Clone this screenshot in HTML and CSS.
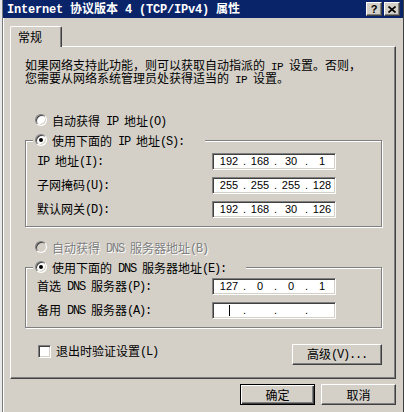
FILE: index.html
```html
<!DOCTYPE html>
<html lang="zh-CN">
<head>
<meta charset="utf-8">
<title>Internet 协议版本 4 (TCP/IPv4) 属性</title>
<link rel="stylesheet" href="styles.css">
</head>
<body>
<div class="window">
  <div class="titlebar">
    <span class="title"><span class="l">Internet </span>协议版本<span class="l"> 4 (TCP/IPv4) </span>属性</span>
    <div class="tbtns">
      <span class="tb tb-help">?</span>
      <span class="tb"><svg width="8" height="7" viewBox="0 0 8 7"><path d="M0.5 0.5 L7.5 6.5 M7.5 0.5 L0.5 6.5" stroke="#000" stroke-width="1.6" fill="none"/></svg></span>
    </div>
  </div>
  <div class="client">
    <div class="tabs"><div class="tab">常规</div></div>
    <div class="panel">
      <p class="desc"><span class="line">如果网络支持此功能，则可以获取自动指派的<span class="l"> IP </span>设置。否则，</span><span class="line">您需要从网络系统管理员处获得适当的<span class="l"> IP </span>设置。</span></p>

      <div class="opt first"><span class="radio"></span><span>自动获得<span class="l"> IP </span>地址<span class="l">(O)</span></span></div>

      <div class="group">
        <div class="ghead w1"><span class="radio on"></span><span>使用下面的<span class="l"> IP </span>地址<span class="l">(S):</span></span></div>
        <div class="rows r1">
          <span class="lab"><span class="l">IP </span>地址<span class="l">(I):</span></span>
          <div class="ip"><span class="f">192</span><span class="d">.</span><span class="f">168</span><span class="d">.</span><span class="f">30</span><span class="d">.</span><span class="f">1</span></div>
          <span class="lab">子网掩码<span class="l">(U):</span></span>
          <div class="ip"><span class="f">255</span><span class="d">.</span><span class="f">255</span><span class="d">.</span><span class="f">255</span><span class="d">.</span><span class="f">128</span></div>
          <span class="lab">默认网关<span class="l">(D):</span></span>
          <div class="ip"><span class="f">192</span><span class="d">.</span><span class="f">168</span><span class="d">.</span><span class="f">30</span><span class="d">.</span><span class="f">126</span></div>
        </div>
      </div>

      <div class="opt gap disabled"><span class="radio dis"></span><span>自动获得<span class="l"> DNS </span>服务器地址<span class="l">(B)</span></span></div>

      <div class="group">
        <div class="ghead w2"><span class="radio on"></span><span>使用下面的<span class="l"> DNS </span>服务器地址<span class="l">(E):</span></span></div>
        <div class="rows r2">
          <span class="lab">首选<span class="l"> DNS </span>服务器<span class="l">(P):</span></span>
          <div class="ip"><span class="f">127</span><span class="d">.</span><span class="f">0</span><span class="d">.</span><span class="f">0</span><span class="d">.</span><span class="f">1</span></div>
          <span class="lab">备用<span class="l"> DNS </span>服务器<span class="l">(A):</span></span>
          <div class="ip"><span class="f"><span class="caret"></span></span><span class="d">.</span><span class="f"></span><span class="d">.</span><span class="f"></span><span class="d">.</span><span class="f"></span></div>
        </div>
      </div>

      <div class="bottomrow">
        <div class="check"><span class="cb"></span><span>退出时验证设置<span class="l">(L)</span></span></div>
        <button class="btn adv">高级<span class="l">(V)...</span></button>
      </div>
    </div>
    <div class="actions">
      <button class="btn def">确定</button>
      <button class="btn">取消</button>
    </div>
  </div>
</div>
</body>
</html>
```

FILE: styles.css
```css
html, body {
  margin: 0;
  width: 404px;
  height: 412px;
  overflow: hidden;
}
body {
  background: linear-gradient(to right, #e8e8e8 0 2px, #7a7a7a 2px 3px, #d4d0c8 3px);
  font-family: "Noto Sans CJK SC", sans-serif;
  font-size: 12px;
  color: #000;
}
.l {
  font-family: "Liberation Mono", monospace;
  font-size: 12px;
  letter-spacing: -1.2px;
  vertical-align: 1px;
}
.window {
  margin-left: 3px;
  width: 401px;
  height: 412px;
  box-sizing: border-box;
  background: #d4d0c8;
  border-right: 1px solid #404040;
  display: flex;
  flex-direction: column;
}
.titlebar {
  height: 18px;
  flex: none;
  background: #0a246a;
  color: #fff;
  display: flex;
  align-items: center;
  justify-content: space-between;
  padding: 0 3px 0 4px;
}
.title {
  font-weight: bold;
  font-size: 12px;
  line-height: 18px;
  white-space: nowrap;
}
.title .l {
  font-size: 12px;
  letter-spacing: -0.2px;
  font-weight: bold;
  vertical-align: 0;
}
.tbtns {
  display: flex;
  gap: 2px;
}
.tb {
  width: 16px;
  height: 14px;
  box-sizing: border-box;
  background: #d4d0c8;
  border: 1px solid;
  border-color: #fff #404040 #404040 #fff;
  box-shadow: inset -1px -1px 0 #808080;
  display: flex;
  align-items: center;
  justify-content: center;
  color: #000;
}
.tb-help {
  font-family: "Liberation Sans", sans-serif;
  font-weight: bold;
  font-size: 11px;
  line-height: 12px;
}
.client {
  flex: 1;
  border-left: 1px solid #fff;
  padding: 8px 0 0 6px;
}
.tabs {
  display: flex;
}
.tab {
  position: relative;
  z-index: 1;
  width: 52px;
  height: 21px;
  box-sizing: border-box;
  margin-bottom: -1px;
  background: #d4d0c8;
  border-top: 1px solid #fff;
  border-left: 1px solid #fff;
  border-right: 1px solid #404040;
  box-shadow: inset -1px 0 0 #808080;
  border-radius: 2px 2px 0 0;
  padding-left: 7px;
  line-height: 19px;
}
.panel {
  width: 386px;
  height: 333px;
  box-sizing: border-box;
  border: 1px solid;
  border-color: #fff #404040 #404040 #fff;
  box-shadow: inset -1px -1px 0 #808080;
  padding: 11px 13px 0 14px;
}
.desc {
  margin: 0;
  display: flex;
  flex-direction: column;
  white-space: nowrap;
}
.desc .line {
  display: block;
  height: 13px;
  line-height: 13px;
  font-size: 12px;
}
.desc .l {
  font-size: 11px;
  letter-spacing: -0.6px;
  line-height: 11px;
  vertical-align: 0;
}
.opt {
  display: flex;
  align-items: center;
  gap: 5px;
  height: 20px;
  padding-left: 10px;
  white-space: nowrap;
}
.opt.first {
  margin-top: 26px;
}
.opt.gap {
  margin-top: 10px;
}
.opt.disabled {
  color: #808080;
  text-shadow: 1px 1px 0 #fff;
}
.radio {
  flex: none;
  position: relative;
  width: 12px;
  height: 12px;
  box-sizing: border-box;
  border-radius: 50%;
  border: 1px solid;
  border-color: #808080 #fff #fff #808080;
  background: #fff;
  box-shadow: inset 1px 1px 0 #404040, inset -1px -1px 0 #d4d0c8;
}
.radio.dis {
  background: #d4d0c8;
}
.radio.on::after {
  content: "";
  position: absolute;
  left: 3px;
  top: 3px;
  width: 4px;
  height: 4px;
  border-radius: 50%;
  background: #000;
}
.group {
  margin-top: 10px;
  border: 1px solid #808080;
  box-shadow: 1px 1px 0 #fff, inset 1px 1px 0 #fff;
  padding-bottom: 8px;
}
.ghead {
  display: flex;
  align-items: center;
  gap: 5px;
  height: 16px;
  margin-top: -9px;
  margin-left: 7px;
  padding: 0 2px;
  box-sizing: border-box;
  background: #d4d0c8;
  white-space: nowrap;
}
.ghead.w1 { width: 172px; }
.ghead.w2 { width: 213px; }
.rows {
  display: grid;
  grid-template-columns: 175px 124px;
  grid-auto-rows: 17px;
  row-gap: 7px;
  align-items: center;
  padding-left: 11px;
}
.rows.r1 { margin-top: 5px; }
.rows.r2 { margin-top: 3px; }
.lab {
  white-space: nowrap;
  line-height: 17px;
}
.ip {
  width: 124px;
  height: 17px;
  box-sizing: border-box;
  border: 1px solid;
  border-color: #808080 #fff #fff #808080;
  box-shadow: inset 1px 1px 0 #404040, inset -1px -1px 0 #d4d0c8;
  background: #fff;
  display: flex;
  align-items: center;
  padding-left: 4px;
  font-family: "Liberation Sans", sans-serif;
  font-size: 11px;
  line-height: 13px;
}
.ip .f {
  width: 24px;
  text-align: center;
  display: flex;
  justify-content: center;
}
.ip .d {
  width: 7px;
  text-align: center;
}
.caret {
  display: block;
  width: 1px;
  height: 11px;
  background: #000;
}
.bottomrow {
  margin-top: 16px;
  display: flex;
  justify-content: space-between;
  align-items: flex-start;
}
.check {
  display: flex;
  align-items: center;
  gap: 5px;
  padding-left: 13px;
  line-height: 13px;
  white-space: nowrap;
}
.cb {
  width: 13px;
  height: 13px;
  box-sizing: border-box;
  border: 1px solid;
  border-color: #808080 #fff #fff #808080;
  box-shadow: inset 1px 1px 0 #404040, inset -1px -1px 0 #d4d0c8;
  background: #fff;
}
.btn {
  width: 75px;
  height: 21px;
  box-sizing: border-box;
  margin: 0;
  padding: 0;
  background: #d4d0c8;
  border: 1px solid;
  border-color: #fff #404040 #404040 #fff;
  box-shadow: inset -1px -1px 0 #808080;
  font-family: "Noto Sans CJK SC", sans-serif;
  font-size: 12px;
  line-height: 17px;
  color: #000;
}
.btn.adv {
  width: 90px;
}
.btn.def {
  border-color: #000;
  box-shadow: inset 1px 1px 0 #fff, inset -1px -1px 0 #404040, inset -2px -2px 0 #808080;
}
.actions {
  width: 386px;
  margin-top: 5px;
  display: flex;
  justify-content: flex-end;
  gap: 6px;
}
```
